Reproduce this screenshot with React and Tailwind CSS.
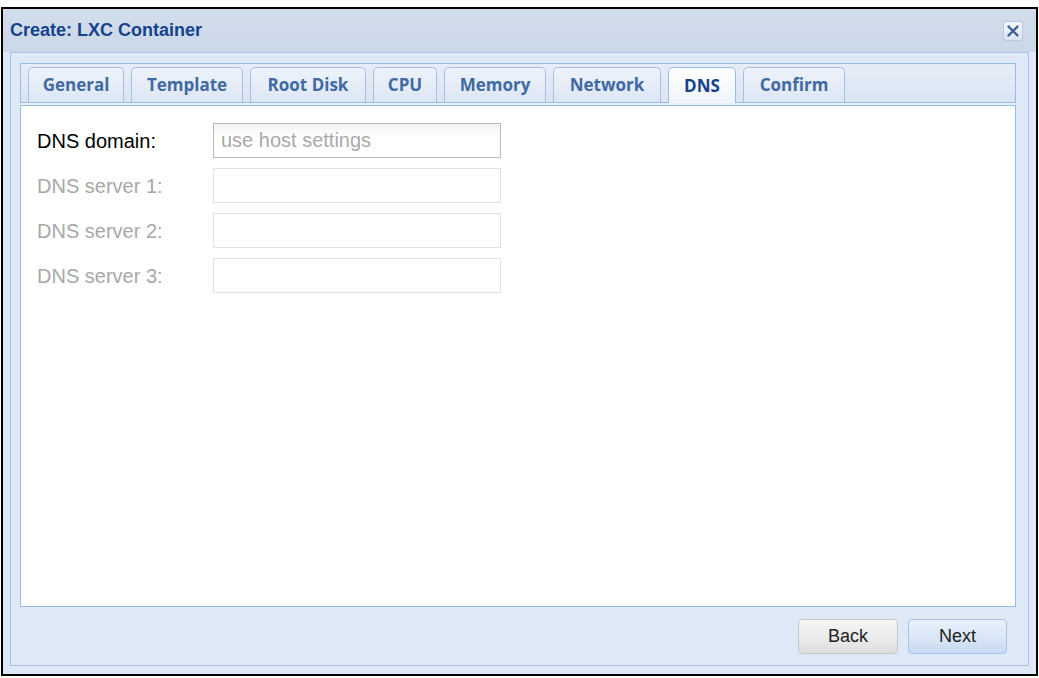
import React from 'react'

const tabs = [
  { label: 'General', w: 'w-[96px]' },
  { label: 'Template', w: 'w-[112px]' },
  { label: 'Root Disk', w: 'w-[116px]' },
  { label: 'CPU', w: 'w-[64px]' },
  { label: 'Memory', w: 'w-[102px]' },
  { label: 'Network', w: 'w-[108px]' },
  { label: 'DNS', w: 'w-[68px]', active: true },
  { label: 'Confirm', w: 'w-[102px]' },
]

const fields = [
  { label: 'DNS domain:', placeholder: 'use host settings', enabled: true },
  { label: 'DNS server 1:' },
  { label: 'DNS server 2:' },
  { label: 'DNS server 3:' },
]

function Tab({ label, w, active }) {
  return (
    <div
      className={
        'h-[35px] rounded-t-[5px] border border-b-0 flex items-center justify-center text-[17px] font-bold ' +
        w +
        (active
          ? ' bg-gradient-to-b from-[#ffffff] to-[#eef4fc] border-[#99bbe8] text-[#15428b] -mb-px relative z-10 h-[36px]'
          : ' bg-gradient-to-b from-[#eef3fa] to-[#dce6f4] border-[#a7c0e2] text-[#416aa3]')
      }
      style={{ fontFamily: '"Open Sans", sans-serif' }}
    >
      {label}
    </div>
  )
}

export default function App() {
  return (
    <div className="w-[1039px] h-[678px] bg-white pt-[7px] pl-[1px]">
      <div
        className="w-[1037px] h-[669px] border-2 border-black bg-[#dfe8f6] flex flex-col"
        style={{ fontFamily: '"Liberation Sans", Arial, sans-serif' }}
      >
        {/* title bar */}
        <div className="h-[43px] shrink-0 flex items-center justify-between pl-[7px] pr-[13px] bg-gradient-to-b from-[#d3deec] to-[#cad7e8]">
          <span className="text-[18px] font-bold text-[#15428b]">Create: LXC Container</span>
          <div className="w-[20px] h-[20px] rounded-[3px] border border-[#b5c8e2] bg-gradient-to-b from-[#f4f7fc] to-[#dbe5f3] flex items-center justify-center">
            <svg width="14" height="14" viewBox="0 0 14 14">
              <path d="M2.5 2.5 L11.5 11.5 M11.5 2.5 L2.5 11.5" stroke="#3e5f93" strokeWidth="2.4" strokeLinecap="round" />
            </svg>
          </div>
        </div>

        {/* body */}
        <div className="flex-1 pl-[7px] pr-[7px] pb-[8px]">
          <div className="h-full border border-[#a9c1e2] flex flex-col pt-[10px] pl-[9px] pr-[12px]">
            {/* tab panel */}
            <div className="flex-1 flex flex-col">
              <div className="border border-b-0 border-[#99bbe8] bg-gradient-to-b from-[#e6edf8] to-[#dae4f3] pt-[3px] pl-[7px] flex items-end gap-[7px]">
                {tabs.map((t) => (
                  <Tab key={t.label} {...t} />
                ))}
              </div>
              <div className="h-[4px] border-y border-[#99bbe8] bg-[#e8eff9]" />
              <div className="flex-1 bg-white border border-t-0 border-[#99bbe8] pt-[17px] pl-[16px] flex flex-col gap-[10px]">
                {fields.map((f) => (
                  <div key={f.label} className="flex items-center">
                    <span
                      className={
                        'w-[176px] text-[20px] ' + (f.enabled ? 'text-black' : 'text-[#a8a8a8]')
                      }
                    >
                      {f.label}
                    </span>
                    <div
                      className={
                        'w-[288px] h-[35px] border flex items-center px-[7px] pb-[2px] text-[20px] text-[#a9a9a9] ' +
                        (f.enabled
                          ? 'border-[#b5b8c8] bg-gradient-to-b from-[#f2f2f2] to-white to-[40%]'
                          : 'border-[#e3e3e3] bg-white')
                      }
                    >
                      {f.placeholder}
                    </div>
                  </div>
                ))}
              </div>
            </div>

            {/* footer */}
            <div className="h-[58px] shrink-0 flex items-center justify-end gap-[10px] pr-[9px]">
              <button className="w-[100px] h-[35px] rounded-[4px] border border-[#c8c8c8] bg-gradient-to-b from-[#f6f6f6] via-[#ececec] to-[#dedede] text-[18px] text-[#222]">
                Back
              </button>
              <button className="w-[99px] h-[35px] rounded-[4px] border border-[#a9c4e8] bg-gradient-to-b from-[#e9f1fc] via-[#dbe7f7] to-[#c7daf2] text-[18px] text-[#222]">
                Next
              </button>
            </div>
          </div>
        </div>
      </div>
    </div>
  )
}
